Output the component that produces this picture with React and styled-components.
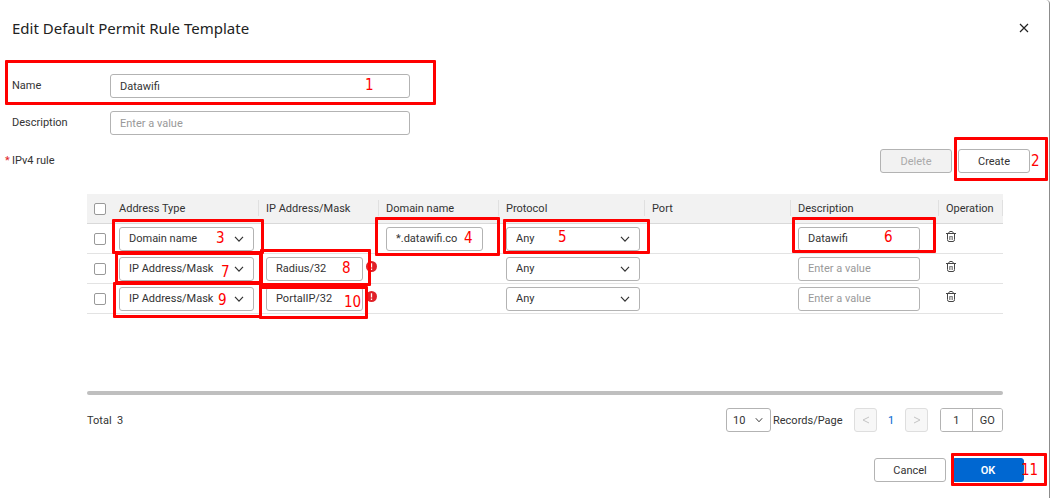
// Edit Default Permit Rule Template - dialog with numbered steps

import React, { useState } from "react";
import styled, { createGlobalStyle } from "styled-components";

const PROTOCOLS = ["Any", "TCP", "UDP", "ICMP"];
const ADDRESS_TYPES = ["Domain name", "IP Address/Mask"];

// box: top right bottom left, num: left top inside of the box
const MARKS = {
  1: { box: "-14px -26px -7px -7px", num: [357, 14] },
  2: { box: "-12px -18px -8px -4px", num: [74, 13] },
  3: { box: "-8px -10px -3px -7px", num: [101, 8] },
  4: { box: "-10px -17px -5px -11px", num: [86, 10] },
  5: { box: "-8px -10px -3px -3px", num: [52, 7] },
  6: { box: "-10px -16px -2px -6px", num: [89, 9] },
  7: { box: "-5px -8px -3px -4px", num: [103, 9] },
  8: { box: "-8px -8px -5px -6px", num: [79, 8] },
  9: { box: "-5px -8px -7px -6px", num: [102, 7] },
  10: { box: "-1px -5px -8px -7px", num: [82, 5] },
  11: { box: "-5px -23px -4px -1px", num: [67, 6] },
};

const ROWS = [
  { id: 1, type: "Domain name", domain: "*.datawifi.co", desc: "Datawifi", marks: { type: 3, domain: 4, protocol: 5, desc: 6 } },
  { id: 2, type: "IP Address/Mask", ip: "Radius/32", desc: "", marks: { type: 7, ip: 8 } },
  { id: 3, type: "IP Address/Mask", ip: "PortalIP/32", desc: "", marks: { type: 9, ip: 10 } },
];

const Mark = ({ n }) => {
  if (!n) return null;
  const { box, num } = MARKS[n];
  return (
    <StMark $box={box}>
      <StMarkNum $left={num[0]} $top={num[1]}>{n}</StMarkNum>
    </StMark>
  );
};

const Chevron = ({ size = 10 }) => (
  <svg width={size} height={size} viewBox="0 0 10 10" fill="none" stroke="currentColor" strokeWidth="1.2">
    <path d="M1 2.8 L5 7.2 L9 2.8" />
  </svg>
);

const TrashIcon = () => (
  <svg width="10" height="11" viewBox="0 0 10 11" fill="none" stroke="#444" strokeWidth="1">
    <path d="M0 2.5 H10 M2.5 2.5 L3.2 1 Q3.5 0.5 4 0.5 H6 Q6.5 0.5 6.8 1 L7.5 2.5 M1.5 2.5 V8.5 Q1.5 10.5 3 10.5 H7 Q8.5 10.5 8.5 8.5 V2.5" />
    <path d="M3.5 9 V5.5 H6.5 V9 M5 5.5 V9" strokeWidth="0.6" />
  </svg>
);

const SelectBox = ({ label, options, value, mark, small }) => {
  const [picked, setPicked] = useState(value);
  return (
    <StSelectWrap $small={small}>
      <StSelect aria-label={label} $small={small} value={picked} onChange={(e) => setPicked(e.target.value)}>
        {options.map((o) => (
          <option key={o}>{o}</option>
        ))}
      </StSelect>
      <StChevron $small={small}>
        <Chevron size={small ? 8 : 10} />
      </StChevron>
      <Mark n={mark} />
    </StSelectWrap>
  );
};

const RuleRow = ({ row }) => (
  <tr>
    <StTd><StCheck type="checkbox" aria-label={`Select rule ${row.id}`} /></StTd>
    <StTd $right={5}>
      <SelectBox label="Address Type" options={ADDRESS_TYPES} value={row.type} mark={row.marks.type} />
    </StTd>
    <StTd $right={16}>
      {row.ip && (
        <StControl>
          <StInput aria-label="IP Address/Mask" defaultValue={row.ip} />
          <StError>
            <svg width="11" height="11" viewBox="0 0 11 11">
              <circle cx="5.5" cy="5.5" r="5.5" fill="#e02128" />
              <path d="M5.5 2.2 V6.4 M5.5 7.6 V8.9" stroke="#fff" strokeWidth="1.3" />
            </svg>
          </StError>
          <Mark n={row.marks.ip} />
        </StControl>
      )}
    </StTd>
    <StTd $right={16}>
      {row.domain && (
        <StControl>
          <StInput aria-label="Domain name" defaultValue={row.domain} />
          <Mark n={row.marks.domain} />
        </StControl>
      )}
    </StTd>
    <StTd $right={5}>
      <SelectBox label="Protocol" options={PROTOCOLS} value="Any" mark={row.marks.protocol} />
    </StTd>
    <StTd />
    <StTd $right={19}>
      <StControl>
        <StInput aria-label="Description" placeholder="Enter a value" defaultValue={row.desc} />
        <Mark n={row.marks.desc} />
      </StControl>
    </StTd>
    <StTd>
      <StIconBtn $row aria-label="Delete rule"><TrashIcon /></StIconBtn>
    </StTd>
  </tr>
);

const App = () => {
  return (
    <>
      <GlobalStyle />
      <StDialog>
        <StHeader>
          <h1>Edit Default Permit Rule Template</h1>
          <StIconBtn aria-label="Close">
            <svg width="10" height="10" viewBox="0 0 10 10" stroke="#222" strokeWidth="1.2">
              <path d="M1 1 L9 9 M9 1 L1 9" />
            </svg>
          </StIconBtn>
        </StHeader>

        <StForm>
          <StField>
            <StLabel htmlFor="name">Name</StLabel>
            <StInput id="name" defaultValue="Datawifi" />
            <Mark n={1} />
          </StField>
          <StField>
            <StLabel htmlFor="description">Description</StLabel>
            <StInput id="description" placeholder="Enter a value" />
          </StField>
          <StToolbar>
            <StLabel as="span" $required>IPv4 rule</StLabel>
            <StBtnGroup>
              <StButton disabled>Delete</StButton>
              <StControl>
                <StButton>Create</StButton>
                <Mark n={2} />
              </StControl>
            </StBtnGroup>
          </StToolbar>
        </StForm>

        <StTableArea>
          <StTable>
            <colgroup>
              <StCol $w={25} />
              <StCol $w={147} />
              <StCol $w={120} />
              <StCol $w={120} />
              <StCol $w={146} />
              <StCol $w={146} />
              <StCol $w={148} />
              <StCol $w={64} />
            </colgroup>
            <thead>
              <tr>
                <StTh $plain><StCheck type="checkbox" aria-label="Select all rules" /></StTh>
                <StTh>Address Type</StTh>
                <StTh>IP Address/Mask</StTh>
                <StTh>Domain name</StTh>
                <StTh>Protocol</StTh>
                <StTh>Port</StTh>
                <StTh>Description</StTh>
                <StTh>Operation</StTh>
              </tr>
            </thead>
            <tbody>
              {ROWS.map((row) => (
                <RuleRow key={row.id} row={row} />
              ))}
            </tbody>
          </StTable>
          <StScrollBar />
        </StTableArea>

        <StPager>
          <StTotal>Total&nbsp; 3</StTotal>
          <SelectBox label="Records per page" options={["10", "20", "50"]} value="10" small />
          <StRecords>Records/Page</StRecords>
          <StPageBtn disabled aria-label="Previous page">
            <svg width="8" height="8" viewBox="0 0 8 8" fill="none" stroke="currentColor">
              <path d="M7 1 L1 4 L7 7" />
            </svg>
          </StPageBtn>
          <StCurrent href="#page-1">1</StCurrent>
          <StPageBtn disabled aria-label="Next page">
            <svg width="8" height="8" viewBox="0 0 8 8" fill="none" stroke="currentColor">
              <path d="M1 1 L7 4 L1 7" />
            </svg>
          </StPageBtn>
          <StGoto>
            <input aria-label="Go to page" defaultValue="1" />
            <button>GO</button>
          </StGoto>
        </StPager>

        <StFooter>
          <StButton>Cancel</StButton>
          <StControl>
            <StButton $primary>OK</StButton>
            <Mark n={11} />
          </StControl>
        </StFooter>
      </StDialog>
    </>
  );
};

export default App;

const GlobalStyle = createGlobalStyle`
  * {
    box-sizing: border-box;
  }

  body {
    margin: 0;
    background-color: #fff;
  }

  body, input, select, button {
    font-family: Roboto, "Noto Sans", sans-serif;
    font-size: 11px;
    color: #333;
  }
`;

const StDialog = styled.main`
  min-height: 100vh;
  padding: 16px 0;

  display: flex;
  flex-direction: column;

  border-right: 1px solid #8c8c8c;
  border-top-right-radius: 4px;
`;

const StHeader = styled.header`
  height: 24px;
  padding: 0 20px 0 12px;

  display: flex;
  align-items: center;
  justify-content: space-between;

  h1 {
    margin: 0;
    font-family: "Noto Sans", sans-serif;
    font-size: 15px;
    font-weight: 400;
    color: #222;
  }
`;

const StForm = styled.section`
  margin-top: 34px;
  padding: 0 19px 0 12px;

  display: flex;
  flex-direction: column;
  gap: 13px;
`;

const StField = styled.div`
  position: relative;
  width: 398px;

  display: grid;
  grid-template-columns: 98px 1fr;
  align-items: center;
`;

const StLabel = styled.label`
  padding-bottom: 2px;

  &::before {
    content: "${(p) => (p.$required ? "*" : "")}";
    width: 7px;
    margin-left: -7px;
    display: inline-block;
    color: #e02128;
  }
`;

const StInput = styled.input`
  width: 100%;
  height: 24px;
  padding: 0 9px;
  display: block;

  background-color: #fff;
  border: 1px solid #b3b3b3;
  border-radius: 3px;

  &::placeholder {
    color: #999;
  }
`;

const StToolbar = styled.div`
  min-height: 26px;

  display: flex;
  align-items: center;
  justify-content: space-between;
`;

const StBtnGroup = styled.div`
  display: flex;
  gap: 6px;
`;

const StControl = styled.div`
  position: relative;
`;

const StButton = styled.button`
  width: 72px;
  height: 24px;
  padding: 0;
  display: block;

  background-color: ${(p) => (p.$primary ? "#0067d1" : "#fff")};
  border: 1px solid ${(p) => (p.$primary ? "#0067d1" : "#b3b3b3")};
  border-radius: 3px;
  color: ${(p) => (p.$primary ? "#fff" : "#333")};
  font-weight: ${(p) => (p.$primary ? 600 : 400)};

  &:disabled {
    background-color: #f2f2f2;
    color: #aaa;
  }
`;

const StTableArea = styled.section`
  min-height: 201px;
  margin: 20px 46px 0 87px;

  display: flex;
  flex-direction: column;
  justify-content: space-between;
`;

const StTable = styled.table`
  width: 100%;
  table-layout: fixed;
  border-collapse: separate;
  border-spacing: 0;
`;

const StCol = styled.col`
  width: ${(p) => p.$w}px;
`;

const StTh = styled.th`
  height: 30px;
  padding: 0 7px;

  background: ${(p) => (p.$plain ? "none" : "linear-gradient(#e0e0e0, #e0e0e0) right 6px / 1px 16px no-repeat")} #f2f2f2;
  border-bottom: 1px solid #d9d9d9;

  font-weight: 400;
  text-align: left;
  white-space: nowrap;
`;

const StTd = styled.td`
  height: 30px;
  padding: 0 ${(p) => p.$right || 7}px 0 7px;
  border-bottom: 1px solid #e3e3e3;
`;

const StCheck = styled.input`
  appearance: none;
  width: 12px;
  height: 12px;
  margin: 0;
  display: block;

  background-color: #fff;
  border: 1px solid #999;
  border-radius: 2px;

  &:checked {
    background-color: #0067d1;
  }
`;

const StSelectWrap = styled.div`
  position: relative;
  width: ${(p) => (p.$small ? "45px" : "100%")};
`;

const StSelect = styled.select`
  appearance: none;
  width: 100%;
  height: 24px;
  padding: 0 ${(p) => (p.$small ? "16px 0 6px" : "24px 0 9px")};
  display: block;

  background-color: #fff;
  border: 1px solid #b3b3b3;
  border-radius: 3px;
`;

const StChevron = styled.span`
  position: absolute;
  top: 0;
  bottom: 0;
  right: ${(p) => (p.$small ? 8 : 10)}px;

  display: flex;
  align-items: center;
  pointer-events: none;
`;

const StError = styled.span`
  position: absolute;
  top: 4px;
  left: 100%;
  padding-left: 3px;
  line-height: 0;
`;

const StIconBtn = styled.button`
  padding: 0 0 ${(p) => (p.$row ? 4 : 0)}px;
  display: block;
  background: none;
  border: none;
  line-height: 0;
`;

const StScrollBar = styled.div`
  height: 4px;
  background-color: #bfbfbf;
  border-radius: 2px;
`;

const StPager = styled.nav`
  margin: 13px 46px 0 87px;

  display: flex;
  align-items: center;
`;

const StTotal = styled.span`
  margin-right: auto;
`;

const StRecords = styled.span`
  width: 83px;
  padding-left: 2px;
`;

const StPageBtn = styled.button`
  width: 23px;
  height: 24px;
  padding: 0;

  display: flex;
  align-items: center;
  justify-content: center;

  background-color: #f7f7f7;
  border: 1px solid #dedede;
  border-radius: 3px;
  color: #c4c4c4;
`;

const StCurrent = styled.a`
  width: 28px;
  color: #0067d1;
  text-align: center;
  text-decoration: none;
`;

const StGoto = styled.div`
  width: 63px;
  height: 24px;
  margin-left: 12px;

  display: flex;

  border: 1px solid #b3b3b3;
  border-radius: 3px;
  overflow: hidden;

  input, button {
    width: 50%;
    padding: 0;
    background-color: #fff;
    border: none;
    text-align: center;
  }

  button {
    border-left: 1px solid #b3b3b3;
  }
`;

const StFooter = styled.footer`
  margin-top: 26px;
  padding-right: 25px;

  display: flex;
  justify-content: flex-end;
  gap: 6px;
`;

// numbered red frames over the controls
const StMark = styled.div`
  position: absolute;
  inset: ${(p) => p.$box};
  z-index: 1;

  border: 3px solid #f00;
  border-radius: 1px;
  pointer-events: none;
`;

const StMarkNum = styled.span`
  position: absolute;
  left: ${(p) => p.$left}px;
  top: ${(p) => p.$top}px;

  font-family: "DejaVu Sans Condensed", "DejaVu Sans", sans-serif;
  font-size: 15px;
  line-height: 16px;
  color: #f00;
`;
